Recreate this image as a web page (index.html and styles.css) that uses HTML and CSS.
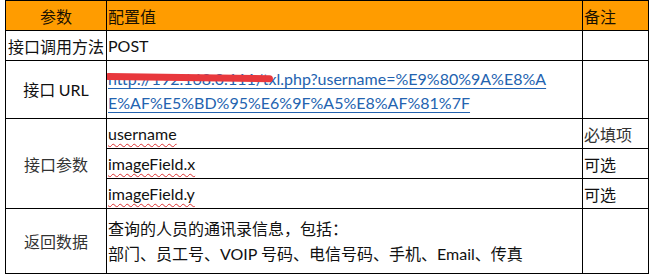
FILE: index.html
```html
<!DOCTYPE html>
<html lang="zh">
<head>
<meta charset="utf-8">
<link rel="stylesheet" href="styles.css">
</head>
<body>
<table class="spec">
  <colgroup>
    <col class="c-name">
    <col class="c-value">
    <col class="c-note">
  </colgroup>
  <tr class="r-head">
    <th class="center muted">参数</th>
    <th>配置值</th>
    <th>备注</th>
  </tr>
  <tr class="r-30">
    <td class="center">接口调用方法</td>
    <td class="latin">POST</td>
    <td></td>
  </tr>
  <tr class="r-url">
    <td class="center">接口 <span class="latin">URL</span></td>
    <td class="url-cell">
      <div class="url-wrap">
        <a class="url">http://192.168.0.111/txl.php?username=%E9%80%9A%E8%A<br>E%AF%E5%BD%95%E6%9F%A5%E8%AF%81%7F</a>
        <span class="redact"></span>
      </div>
    </td>
    <td></td>
  </tr>
  <tr class="r-30">
    <td class="center muted" rowspan="3">接口参数</td>
    <td class="latin"><span class="spell">username</span></td>
    <td class="muted">必填项</td>
  </tr>
  <tr class="r-30">
    <td class="latin"><span class="spell">imageField.x</span></td>
    <td>可选</td>
  </tr>
  <tr class="r-30">
    <td class="latin"><span class="spell">imageField.y</span></td>
    <td>可选</td>
  </tr>
  <tr class="r-ret">
    <td class="center muted">返回数据</td>
    <td class="ret">
      <div>查询的人员的通讯录信息，包括：</div>
      <div>部门、员工号、<span class="latin">VOIP</span> 号码、电信号码、手机、<span class="latin">Email</span>、传真</div>
    </td>
    <td></td>
  </tr>
</table>
</body>
</html>
```

FILE: styles.css
```css
html, body {
  margin: 0;
  padding: 0;
  background: #fff;
}
body {
  padding: 0 0 0 5px;
  font-family: "Noto Sans CJK SC", "Noto Sans", sans-serif;
  font-size: 16px;
  color: #111;
}
.spec {
  border-collapse: collapse;
  table-layout: fixed;
  width: 643px;
}
.c-name { width: 101px; }
.c-value { width: 476px; }
.c-note { width: 66px; }
.spec th, .spec td {
  border: 1px solid #000;
  padding: 0 0 0 1px;
  text-align: left;
  vertical-align: middle;
  font-weight: normal;
  line-height: 20px;
  white-space: nowrap;
  overflow: hidden;
}
.spec th {
  background: #ff9c00;
  color: #1a1100;
}
.r-head { height: 30px; }
.r-30 { height: 30px; }
.r-url { height: 58px; }
.r-ret { height: 65px; }
.spec .center {
  text-align: center;
  padding: 0;
}
.muted { color: #333; }
.latin {
  font-family: "Lato", "Open Sans", sans-serif;
  font-size: 16px;
}
.spell {
  text-decoration: underline wavy #d33;
  text-decoration-thickness: 1px;
  text-underline-offset: 3px;
}
.url-cell { padding-left: 1px; }
.url-wrap {
  position: relative;
}
.url {
  display: block;
  font-family: "Lato", "Open Sans", sans-serif;
  font-size: 16px;
  line-height: 24px;
  padding-top: 2px;
  color: #2363b0;
  text-decoration: underline;
  text-decoration-color: #2363b0;
  text-underline-offset: 3px;
}
.redact {
  position: absolute;
  left: -3px;
  top: 8px;
  width: 168px;
  height: 7px;
  background: #e8383d;
  border-radius: 4px;
  transform: rotate(0.8deg);
  transform-origin: left center;
}
.ret div {
  line-height: 25px;
}
.ret .latin { font-size: 16px; }
```
